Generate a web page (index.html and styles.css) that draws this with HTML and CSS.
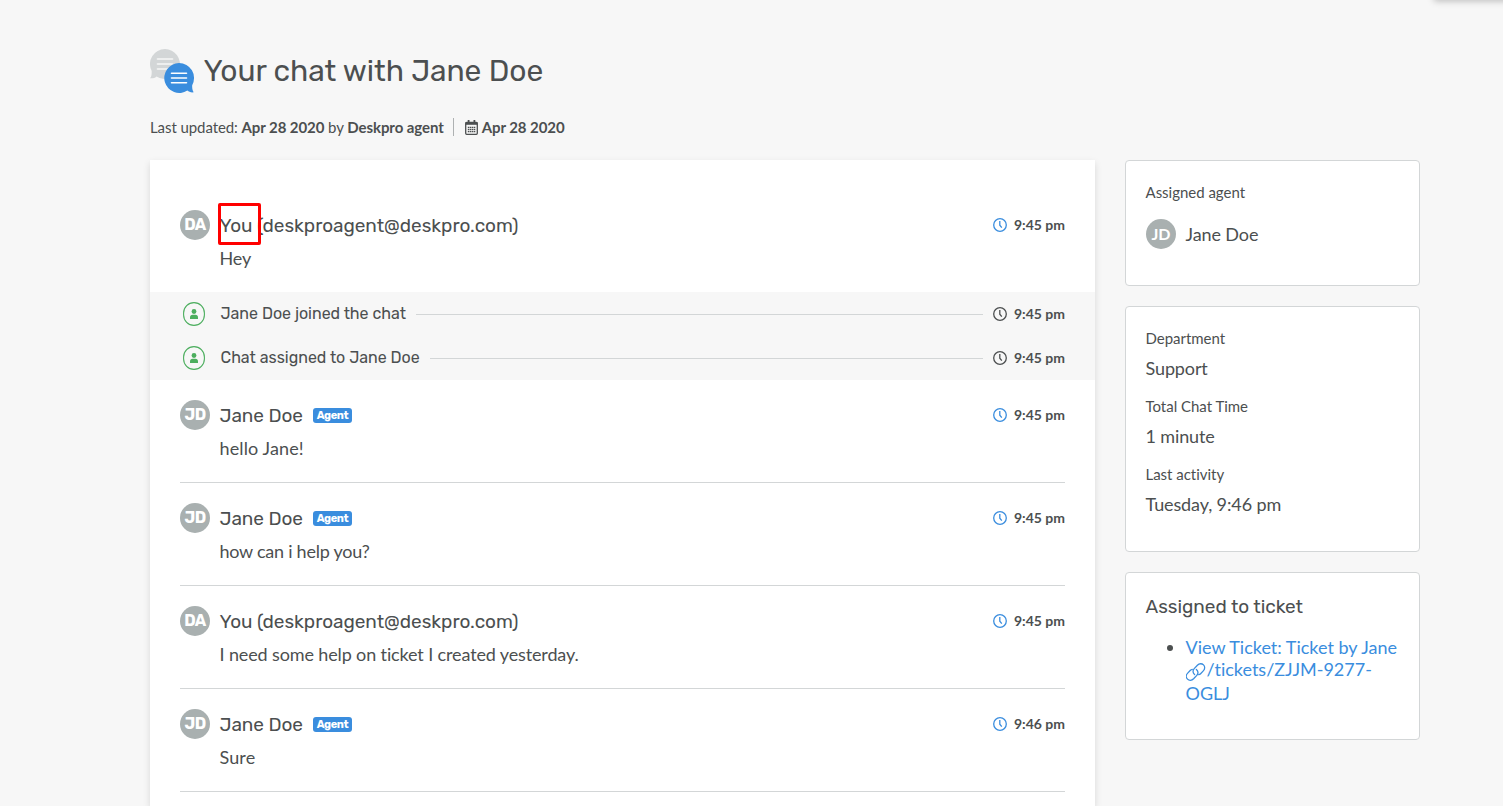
FILE: index.html
```html
<!DOCTYPE html>
<html lang="en">
<head>
<meta charset="utf-8">
<title>Your chat with Jane Doe</title>
<link rel="stylesheet" href="styles.css">
</head>
<body>
<svg class="defs" width="0" height="0">
  <symbol id="clock" viewBox="0 0 14 14"><circle cx="7" cy="7" r="6.3" fill="none" stroke="currentColor" stroke-width="1.3"/><path d="M6.8 3v4.2l2 2.4" fill="none" stroke="currentColor" stroke-width="1.3"/></symbol>
  <symbol id="person" viewBox="0 0 22 24"><rect x=".6" y=".6" width="20.8" height="22.8" rx="10.4" fill="none" stroke="currentColor" stroke-width="1.1"/><circle cx="11" cy="9.5" r="2.4" fill="currentColor"/><path d="M7 17v-1.6c0-1.6 1-2.6 2.5-2.6h3c1.500 0 2.500 1 2.500 2.600V17z" fill="currentColor"/></symbol>
</svg>
<div class="floating-widget"></div>
<div class="page">
  <header class="heading">
    <svg class="chat-icon" width="45" height="45" viewBox="0 0 45 45">
      <path d="M15 0a15 15 0 1 1-8.500 27.400C5 29 2.500 29.500 0 29.300c1.400-1.300 1.900-3.500 1.600-7.500A15 15 0 0 1 15 0z" fill="#d3d6d7"/>
      <path d="M7.500 10h15M7.500 15h15M7.500 20h15" stroke="#f7f7f7" stroke-width="1.600" stroke-linecap="round"/>
      <path d="M29 14a15 15 0 0 1 13.200 22.200c-.2 3 .3 5.500 1.600 7.100-2.600.3-5-.2-6.400-1.700A15 15 0 1 1 29 14z" fill="#3a8dde"/>
      <path d="M21.500 24.300h15M21.500 29h15M21.500 33.700h15" stroke="#fff" stroke-width="1.600" stroke-linecap="round"/>
    </svg>
    <h1 class="title">Your chat with Jane Doe</h1>
  </header>
  <div class="meta">
    <span>Last updated: <b>Apr 28 2020</b> by <b>Deskpro agent</b></span>
    <span class="meta-date">
      <svg width="13" height="15" viewBox="0 0 13 15"><path d="M3.600 0v3M9.400 0v3" stroke="#4c4f50" stroke-width="1.800"/><rect x=".7" y="2.500" width="11.600" height="11.800" rx="1" fill="none" stroke="#4c4f50" stroke-width="1.300"/><path d="M.5 3.500h12" stroke="#4c4f50" stroke-width="2.600"/><path d="M2.800 7.400h7.600M2.800 9.500h7.600M2.800 11.600h7.600" stroke="#4c4f50" stroke-width="1.300" stroke-dasharray="1.500 .5"/></svg>
      <b>Apr 28 2020</b>
    </span>
  </div>
  <div class="columns">
    <main class="chat">
      <article class="message message-plain">
        <div class="message-head"><span class="avatar">DA</span><span class="name email"><span class="marked">You</span> (deskproagent@deskpro.com)</span><span class="time"><svg class="clock"><use href="#clock"/></svg>9:45 pm</span></div>
        <p class="message-body">Hey</p>
      </article>
      <div class="events">
        <div class="event"><svg class="person"><use href="#person"/></svg><span class="event-text">Jane Doe joined the chat</span><span class="rule"></span><span class="time"><svg class="clock"><use href="#clock"/></svg>9:45 pm</span></div>
        <div class="event"><svg class="person"><use href="#person"/></svg><span class="event-text">Chat assigned to Jane Doe</span><span class="rule"></span><span class="time"><svg class="clock"><use href="#clock"/></svg>9:45 pm</span></div>
      </div>
      <article class="message">
        <div class="message-head"><span class="avatar">JD</span><span class="name">Jane Doe</span><span class="badge">Agent</span><span class="time"><svg class="clock"><use href="#clock"/></svg>9:45 pm</span></div>
        <p class="message-body loose">hello Jane!</p>
      </article>
      <article class="message">
        <div class="message-head"><span class="avatar">JD</span><span class="name">Jane Doe</span><span class="badge">Agent</span><span class="time"><svg class="clock"><use href="#clock"/></svg>9:45 pm</span></div>
        <p class="message-body tight">how can i help you?</p>
      </article>
      <article class="message">
        <div class="message-head"><span class="avatar">DA</span><span class="name email">You (deskproagent@deskpro.com)</span><span class="time"><svg class="clock"><use href="#clock"/></svg>9:45 pm</span></div>
        <p class="message-body">I need some help on ticket I created yesterday.</p>
      </article>
      <article class="message">
        <div class="message-head"><span class="avatar">JD</span><span class="name">Jane Doe</span><span class="badge">Agent</span><span class="time"><svg class="clock"><use href="#clock"/></svg>9:46 pm</span></div>
        <p class="message-body loose">Sure</p>
      </article>
    </main>
    <aside class="sidebar">
      <section class="card card-agent">
        <div class="label">Assigned agent</div>
        <div class="agent"><span class="avatar avatar-lato">JD</span><span class="agent-name">Jane Doe</span></div>
      </section>
      <section class="card card-details">
        <div class="label">Department</div><div class="value">Support</div>
        <div class="label">Total Chat Time</div><div class="value">1 minute</div>
        <div class="label">Last activity</div><div class="value">Tuesday, 9:46 pm</div>
      </section>
      <section class="card card-ticket">
        <h2 class="card-title">Assigned to ticket</h2>
        <ul class="tickets"><li><a class="ticket-link">View Ticket: Ticket by Jane<br><svg class="link-icon" width="20" height="20" viewBox="0 0 20 20" fill="none" stroke="currentColor" stroke-width="1.300" stroke-linecap="round"><path d="M8.600 12.600C6.700 11 6.500 8.400 8.200 6.600L11.400 3.200c1.900-1.900 4.500-1.900 6.100-.3s1.600 4.200-.2 6L14.600 11.700c-.6.600-1.200.9-1.900 1"/><path d="M10.400 7.400c1.900 1.600 2.100 4.200.4 6L7.600 16.800c-1.900 1.900-4.500 1.900-6.100.3s-1.600-4.200.2-6L4.400 8.300c.6-.6 1.200-.9 1.900-1"/></svg>/tickets/ZJJM-9277-<br>OGLJ</a></li></ul>
      </section>
    </aside>
  </div>
</div>
</body>
</html>
```
FILE: styles.css
```css
*, *::after { box-sizing: border-box; }
body { margin: 0; height: 806px; overflow: hidden; background: #f7f7f7; color: #4c4f50; font-family: Lato, sans-serif; font-size: 18px; font-variant-ligatures: none; }
.defs { position: absolute; }
.floating-widget { position: absolute; top: -20px; left: 1434px; width: 90px; height: 20px; box-shadow: 0 1px 7px rgba(0,0,0,.25); }
.page { width: 1270px; margin-left: 150px; padding-top: 49px; }
.heading { display: flex; gap: 9px; height: 45px; }
.chat-icon { flex: none; }
.title { margin: 0 0 0 -.5px; font: 400 30px/45px Rubik, sans-serif; letter-spacing: -.06px; white-space: nowrap; }
.meta { display: flex; align-items: center; height: 18px; margin-top: 24px; font-size: 15px; line-height: 18px; letter-spacing: -.08px; white-space: nowrap; }
.meta-date { display: flex; align-items: center; gap: 4px; height: 18px; margin-left: 9px; padding-left: 11px; border-left: 1px solid #aeb1b2; }
.columns { display: flex; align-items: flex-start; gap: 30px; margin-top: 24px; }
.chat { width: 945px; height: 646px; padding-top: 30px; background: #fff; box-shadow: 0 3px 7px rgba(0,0,0,.13); }
.message { height: 103px; margin: 0 30px; padding-top: 20px; border-bottom: 1px solid #d3d6d7; }
.message-plain { height: 102px; border: 0; }
.message-head { display: flex; align-items: center; height: 30px; }
.avatar { flex: none; width: 30px; height: 30px; margin-right: 10px; border-radius: 50%; background: #a9b0b0; color: #fff; font: 700 16px/29px Rubik, sans-serif; letter-spacing: -.5px; text-align: center; }
.avatar-lato { font: 700 16px/30px Lato, sans-serif; letter-spacing: 0; }
.name { margin-left: -.5px; padding-top: 1px; font: 400 19px/30px Rubik, sans-serif; letter-spacing: -.06px; white-space: nowrap; }
.email { letter-spacing: -.04px; }
.marked { position: relative; }
.marked::after { content: ""; position: absolute; left: -1.5px; top: -11px; width: 43px; height: 42px; border: 3px solid #f00; border-radius: 2px; }
.badge { width: 39px; height: 15px; margin-left: 10px; border-radius: 3px; background: #3a8dde; color: #fff; font: 700 11px/16px Rubik, sans-serif; letter-spacing: -.4px; text-align: center; }
.time { display: flex; align-items: center; gap: 7px; margin-left: auto; font-size: 14px; font-weight: 700; line-height: 18px; white-space: nowrap; }
.clock { width: 14px; height: 14px; color: #4c4f50; }
.message .clock { color: #3a8dde; }
.message-body { margin: 6px 0 0 39.5px; line-height: 24px; letter-spacing: -.13px; }
.tight { letter-spacing: -.25px; }
.loose { letter-spacing: .12px; }
.events { padding: 0 30px; background: #f7f7f7; }
.event { display: flex; align-items: center; height: 44px; }
.person { width: 22px; height: 24px; margin: 0 15.5px 0 3px; color: #4cae5e; }
.event-text { font: 400 16px/24px Rubik, sans-serif; letter-spacing: -.02px; white-space: nowrap; }
.rule { flex: 1; height: 1px; margin: 1px 10px 0; background: #d3d6d7; }
.sidebar { display: flex; flex-direction: column; gap: 20px; width: 295px; }
.card { padding: 20px 20px 0 19.5px; border: 1px solid #d3d6d7; border-radius: 4px; background: #fff; }
.card-agent { height: 126px; }
.card-details { height: 246px; }
.card-ticket { height: 168px; }
.label { font-size: 15px; line-height: 22px; letter-spacing: -.02px; }
.value { margin-bottom: 12px; padding-top: 4px; line-height: 30px; letter-spacing: -.12px; }
.agent { display: flex; align-items: center; margin: 16px 0 0 .5px; }
.agent-name { margin-left: -.5px; line-height: 30px; letter-spacing: -.1px; }
.card-title { margin: 0; padding-top: 1px; font: 400 19px/26px Rubik, sans-serif; letter-spacing: -.04px; }
.tickets { margin: 16px 0 0; padding-left: 40px; line-height: 22.4px; }
.ticket-link { color: #3a8dde; white-space: nowrap; }
.link-icon { vertical-align: -6px; margin: -6px 1px 0 0; }
```
